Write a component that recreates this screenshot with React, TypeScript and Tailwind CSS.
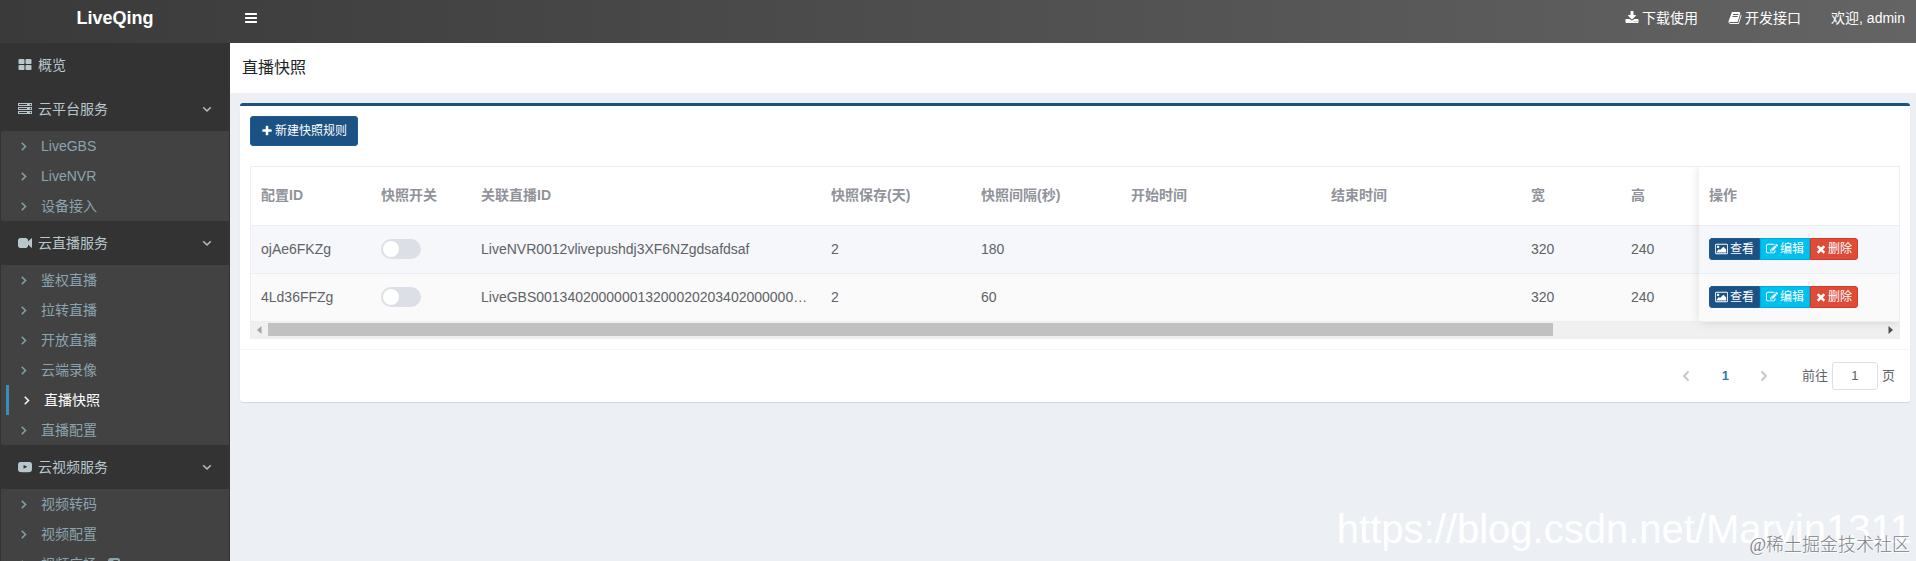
import type { ReactNode } from "react";
import clsx from "clsx";

const icons = {
  bars: "M1664 1344v128q0 26-19 45t-45 19h-1408q-26 0-45-19t-19-45v-128q0-26 19-45t45-19h1408q26 0 45 19t19 45zm0-512v128q0 26-19 45t-45 19h-1408q-26 0-45-19t-19-45v-128q0-26 19-45t45-19h1408q26 0 45 19t19 45zm0-512v128q0 26-19 45t-45 19h-1408q-26 0-45-19t-19-45v-128q0-26 19-45t45-19h1408q26 0 45 19t19 45z",
  download: "M1344 1344q0-26-19-45t-45-19-45 19-19 45 19 45 45 19 45-19 19-45zm256 0q0-26-19-45t-45-19-45 19-19 45 19 45 45 19 45-19 19-45zm128-224v320q0 40-28 68t-68 28h-1472q-40 0-68-28t-28-68v-320q0-40 28-68t68-28h465l135 136q58 56 136 56t136-56l136-136h464q40 0 68 28t28 68zm-325-569q17 41-14 70l-448 448q-18 19-45 19t-45-19l-448-448q-31-29-14-70 17-39 59-39h256v-448q0-26 19-45t45-19h256q26 0 45 19t19 45v448h256q42 0 59 39z",
  book: "M1703 478q40 57 18 129l-275 906q-19 64-76.5 107.5t-122.5 43.5h-923q-77 0-148.5-53.5t-99.5-131.5q-24-67-2-127 0-4 3-27t4-37q1-8-3-21.5t-3-19.5q2-11 8-21t16.5-23.5 16.5-23.5q23-38 45-91.5t30-91.5q3-10 .5-30t-.5-28q3-11 17-28t17-23q21-36 42-92t25-90q1-9-2.5-32t.5-28q4-13 22-30.5t22-22.5q19-26 42.5-84.5t27.5-96.5q1-8-3-25.5t-2-26.5q2-8 9-18t18-23 17-21q8-12 16.5-30.5t15-35 16-36 19.5-32 26.5-23.5 36-11.5 47.5 5.5l-1 3q38-9 51-9h761q74 0 114 56t18 130l-274 906q-36 119-71.5 153.5t-128.5 34.5h-869q-27 0-38 15-11 16-1 43 24 70 144 70h923q29 0 56-15.5t35-41.5l300-987q7-22 5-57 38 15 59 43zm-1064 2q-4 13 2 22.5t20 9.5h608q13 0 25.5-9.5t16.5-22.5l21-64q4-13-2-22.5t-20-9.5h-608q-13 0-25.5 9.5t-16.5 22.5zm-83 256q-4 13 2 22.5t20 9.5h608q13 0 25.5-9.5t16.5-22.5l21-64q4-13-2-22.5t-20-9.5h-608q-13 0-25.5 9.5t-16.5 22.5z",
  thLarge: "M832 1024v384q0 52-38 90t-90 38h-512q-52 0-90-38t-38-90v-384q0-52 38-90t90-38h512q52 0 90 38t38 90zm0-768v384q0 52-38 90t-90 38h-512q-52 0-90-38t-38-90v-384q0-52 38-90t90-38h512q52 0 90 38t38 90zm896 768v384q0 52-38 90t-90 38h-512q-52 0-90-38t-38-90v-384q0-52 38-90t90-38h512q52 0 90 38t38 90zm0-768v384q0 52-38 90t-90 38h-512q-52 0-90-38t-38-90v-384q0-52 38-90t90-38h512q52 0 90 38t38 90z",
  server: "M128 1408h1024v-128h-1024v128zm0-512h1024v-128h-1024v128zm1568 448q0-40-28-68t-68-28-68 28-28 68 28 68 68 28 68-28 28-68zm-1568-960h1024v-128h-1024v128zm1568 448q0-40-28-68t-68-28-68 28-28 68 28 68 68 28 68-28 28-68zm0-512q0-40-28-68t-68-28-68 28-28 68 28 68 68 28 68-28 28-68zm96 832v384h-1792v-384h1792zm0-512v384h-1792v-384h1792zm0-512v384h-1792v-384h1792z",
  video: "M1792 352v1088q0 42-39 59-13 5-25 5-27 0-45-19l-403-403v166q0 119-84.5 203.5t-203.5 84.5h-704q-119 0-203.5-84.5t-84.5-203.5v-704q0-119 84.5-203.5t203.5-84.5h704q119 0 203.5 84.5t84.5 203.5v165l403-402q18-19 45-19 12 0 25 5 39 17 39 59z",
  youtube: "M711 1128l484-250-484-253zM260 262q636-44 1272 0 200 14 240 220 40 414 0 828-40 206-240 220-636 44-1272 0-200-14-240-220-40-414 0-828 40-206 240-220z",
  angleDown: "M1395 736q0 13-10 23l-466 466q-10 10-23 10t-23-10l-466-466q-10-10-10-23t10-23l50-50q10-10 23-10t23 10l393 393 393-393q10-10 23-10t23 10l50 50q10 10 10 23z",
  angleRight: "M1171 960q0 13-10 23l-466 466q-10 10-23 10t-23-10l-50-50q-10-10-10-23t10-23l393-393-393-393q-10-10-10-23t10-23l50-50q10-10 23-10t23 10l466 466q10 10 10 23z",
  external: "M1408 928v-480q0-26-19-45t-45-19h-480q-42 0-59 39-17 41 14 70l144 144-534 534q-19 19-19 45t19 45l102 102q19 19 45 19t45-19l534-534 144 144q18 19 45 19 12 0 25-5 39-17 39-59zm256-512v960q0 119-84.5 203.5t-203.5 84.5h-960q-119 0-203.5-84.5t-84.5-203.5v-960q0-119 84.5-203.5t203.5-84.5h960q119 0 203.5 84.5t84.5 203.5z",
  plus: "M1600 736v192q0 40-28 68t-68 28h-416v416q0 40-28 68t-68 28h-192q-40 0-68-28t-28-68v-416h-416q-40 0-68-28t-28-68v-192q0-40 28-68t68-28h416v-416q0-40 28-68t68-28h192q40 0 68 28t28 68v416h416q40 0 68 28t28 68z",
  picture: "M576 576q0 80-56 136t-136 56-136-56-56-136 56-136 136-56 136 56 56 136zm1024 384v448h-1408v-192l320-320 160 160 512-512zm96-704h-1600q-13 0-22.5 9.5t-9.5 22.5v1216q0 13 9.5 22.5t22.5 9.5h1600q13 0 22.5-9.5t9.5-22.5v-1216q0-13-9.5-22.5t-22.5-9.5zm160 32v1216q0 66-47 113t-113 47h-1600q-66 0-113-47t-47-113v-1216q0-66 47-113t113-47h1600q66 0 113 47t47 113z",
  edit: "M888 1184l116-116-152-152-116 116v56h96v96h56zm440-720q-16-16-33 1l-350 350q-17 17-1 33t33-1l350-350q17-17 1-33zm80 594v190q0 119-84.5 203.5t-203.5 84.5h-832q-119 0-203.5-84.5t-84.5-203.5v-832q0-119 84.5-203.5t203.5-84.5h832q63 0 117 25 15 7 18 23 3 17-9 29l-49 49q-14 14-32 8-23-6-45-6h-832q-66 0-113 47t-47 113v832q0 66 47 113t113 47h832q66 0 113-47t47-113v-126q0-13 9-22l64-64q15-15 35-7t20 29zm-96-738l288 288-672 672h-288v-288zm444 132l-92 92-288-288 92-92q28-28 68-28t68 28l152 152q28 28 28 68t-28 68z",
  times: "M1490 1322q0 40-28 68l-136 136q-28 28-68 28t-68-28l-294-294-294 294q-28 28-68 28t-68-28l-136-136q-28-28-28-68t28-68l294-294-294-294q-28-28-28-68t28-68l136-136q28-28 68-28t68 28l294 294 294-294q28-28 68-28t68 28l136 136q28 28 28 68t-28 68l-294 294 294 294q28 28 28 68z",
};

type IconName = keyof typeof icons;

function Icon({ name, className = "size-3.5", viewBox = "0 0 1792 1792" }: { name: IconName; className?: string; viewBox?: string }) {
  return (
    <svg viewBox={viewBox} fill="currentColor" fillRule="evenodd" className={clsx("shrink-0", className)} aria-hidden="true">
      <path d={icons[name]} />
    </svg>
  );
}

type MenuItem = { label: string; active?: boolean; external?: boolean };
type MenuGroup = { label: string; icon: IconName; items: MenuItem[] };

const menu: MenuGroup[] = [
  { label: "概览", icon: "thLarge", items: [] },
  {
    label: "云平台服务",
    icon: "server",
    items: [{ label: "LiveGBS" }, { label: "LiveNVR" }, { label: "设备接入" }],
  },
  {
    label: "云直播服务",
    icon: "video",
    items: [
      { label: "鉴权直播" },
      { label: "拉转直播" },
      { label: "开放直播" },
      { label: "云端录像" },
      { label: "直播快照", active: true },
      { label: "直播配置" },
    ],
  },
  {
    label: "云视频服务",
    icon: "youtube",
    items: [{ label: "视频转码" }, { label: "视频配置" }, { label: "视频广场", external: true }],
  },
];

const rows = [
  { id: "ojAe6FKZg", live: "LiveNVR0012vlivepushdj3XF6NZgdsafdsaf", days: 2, interval: 180, width: 320, height: 240 },
  { id: "4Ld36FFZg", live: "LiveGBS0013402000000132000202034020000001320000001", days: 2, interval: 60, width: 320, height: 240 },
];

const headers = ["配置ID", "快照开关", "关联直播ID", "快照保存(天)", "快照间隔(秒)", "开始时间", "结束时间", "宽", "高"];

function Header() {
  return (
    <header className="flex h-[43px] shrink-0 items-start bg-linear-to-r from-[#3a3a3a] to-[#646464] text-sm leading-5 text-white">
      <a href="#" className="w-[230px] py-2 text-center text-lg leading-5 font-bold">LiveQing</a>
      <button type="button" aria-label="菜单" className="flex h-9 items-center px-[14px]">
        <Icon name="bars" />
      </button>
      <nav className="ml-auto flex gap-[30px] py-2 pr-[11px]">
        <a href="#" className="flex items-center gap-[3px]">
          <Icon name="download" />
          下载使用
        </a>
        <a href="#" className="flex items-center gap-[3px]">
          <Icon name="book" />
          开发接口
        </a>
        <a href="#">欢迎, admin</a>
      </nav>
    </header>
  );
}

function Sidebar() {
  return (
    <aside className="w-[230px] shrink-0 overflow-hidden border-x border-[#333] bg-[#333] text-sm leading-5">
      {menu.map((group) => (
        <div key={group.label}>
          <a href="#" className="flex h-11 items-center gap-[6px] pr-[15px] pl-[17px] text-[#b8c7ce]">
            <Icon name={group.icon} />
            {group.label}
            {group.items.length > 0 && <Icon name="angleDown" className="ml-auto size-3.5 stroke-current stroke-[60]" />}
          </a>
          {group.items.length > 0 && (
            <ul className="bg-[#424242]">
              {group.items.map((item) => (
                <li key={item.label} className={clsx(item.active && "pl-[5px]")}>
                  <a
                    href="#"
                    className={clsx(
                      "flex h-[30px] items-center gap-[10px]",
                      item.active ? "border-l-[3px] border-[#3c8dbc] pl-[11px] text-white" : "pl-4 text-[#8aa4af]",
                    )}
                  >
                    <Icon name="angleRight" className="size-3.5 stroke-current stroke-[60]" />
                    {item.label}
                    {item.external && <Icon name="external" />}
                  </a>
                </li>
              ))}
            </ul>
          )}
        </div>
      ))}
    </aside>
  );
}

function ActionButton({ className, children }: { className: string; children: ReactNode }) {
  return (
    <button type="button" className={clsx("flex h-[22px] items-center gap-[2px] border px-[5px] text-xs text-white", className)}>
      {children}
    </button>
  );
}

function SnapshotTable() {
  return (
    <div className="overflow-hidden border border-b-0 border-[#ebeef5]">
      <div className="flex">
        <div className="min-w-0 flex-1 overflow-hidden">
          <table className="w-full min-w-[1448px] table-fixed text-left text-sm leading-[23px] text-[#606266]">
            <colgroup>
              <col className="w-[120px]" />
              <col className="w-[100px]" />
              <col className="w-[350px]" />
              <col className="w-[150px]" />
              <col className="w-[150px]" />
              <col className="w-[200px]" />
              <col className="w-[200px]" />
              <col className="w-[100px]" />
              <col />
            </colgroup>
            <thead>
              <tr className="h-[58px] border-b border-[#ebeef5] text-[#909399]">
                {headers.map((header) => (
                  <th key={header} className="px-[10px] font-bold">{header}</th>
                ))}
              </tr>
            </thead>
            <tbody>
              {rows.map((row) => (
                <tr key={row.id} className="h-12 border-b border-[#ebeef5] odd:bg-[#f5f7fa] even:bg-[#fafafa]">
                  <td className="px-[10px]">{row.id}</td>
                  <td className="px-[10px]">
                    <input
                      type="checkbox"
                      role="switch"
                      aria-label="快照开关"
                      className="block h-5 w-10 appearance-none rounded-full bg-[#dcdfe6] p-[2px] before:block before:size-4 before:rounded-full before:bg-white checked:bg-[#1c5183] checked:before:ml-5"
                    />
                  </td>
                  <td className="truncate px-[10px]">{row.live}</td>
                  <td className="px-[10px]">{row.days}</td>
                  <td className="px-[10px]">{row.interval}</td>
                  <td />
                  <td />
                  <td className="px-[10px]">{row.width}</td>
                  <td className="px-[10px]">{row.height}</td>
                </tr>
              ))}
            </tbody>
          </table>
        </div>

        {/* Fixed action column */}
        <div className="relative z-10 w-[200px] shrink-0 bg-white shadow-[0_0_10px_rgba(0,0,0,0.12)]">
          <table className="w-full text-left text-sm leading-[23px]">
            <thead>
              <tr className="h-[58px] border-b border-[#ebeef5] text-[#909399]">
                <th className="px-[10px] font-bold">操作</th>
              </tr>
            </thead>
            <tbody>
              {rows.map((row) => (
                <tr key={row.id} className="h-12 border-b border-[#ebeef5] odd:bg-[#f5f7fa] even:bg-[#fafafa]">
                  <td className="px-[10px]">
                    <div className="flex">
                      <ActionButton className="rounded-l-[3px] border-[#1f5a92] bg-[#1c5183]">
                        <Icon name="picture" className="h-3 w-[13px]" viewBox="-64 0 1920 1792" />
                        查看
                      </ActionButton>
                      <ActionButton className="border-[#00acd6] bg-[#00c0ef]">
                        <Icon name="edit" className="size-3" />
                        编辑
                      </ActionButton>
                      <ActionButton className="rounded-r-[3px] border-[#d73925] bg-[#dd4b39]">
                        <Icon name="times" className="h-3 w-[10px]" viewBox="192 0 1408 1792" />
                        删除
                      </ActionButton>
                    </div>
                  </td>
                </tr>
              ))}
            </tbody>
          </table>
        </div>
      </div>

      {/* Horizontal scrollbar */}
      <div className="flex h-[17px] items-center border-b border-[#ebeef5] bg-[#f0f0f0]">
        <svg viewBox="0 0 17 16" className="h-4 w-[17px] shrink-0" aria-hidden="true">
          <path d="M10.500 4v8L6 8z" fill="#a3a3a3" />
        </svg>
        <div className="flex-1">
          <div className="h-[13px] w-[79.6%] bg-[#c1c1c1]" />
        </div>
        <svg viewBox="0 0 17 16" className="h-4 w-[17px] shrink-0" aria-hidden="true">
          <path d="M6.500 4v8L11 8z" fill="#505050" />
        </svg>
      </div>
    </div>
  );
}

function Pagination() {
  return (
    <div className="flex items-center justify-end border-t border-[#f4f4f4] py-3 pr-[15px] text-[13px] leading-7 text-[#606266]">
      <button type="button" aria-label="上一页" className="flex h-7 w-[39px] items-center justify-center text-[#c0c4cc]">
        <svg viewBox="0 0 12 12" className="size-3" fill="none" stroke="currentColor" strokeWidth="1.8" aria-hidden="true">
          <path d="M8.500 1.500L4 6l4.500 4.500" />
        </svg>
      </button>
      <button type="button" className="h-7 w-[39px] font-bold text-[#337ab7]">1</button>
      <button type="button" aria-label="下一页" className="flex h-7 w-[39px] items-center justify-center text-[#c0c4cc]">
        <svg viewBox="0 0 12 12" className="size-3" fill="none" stroke="currentColor" strokeWidth="1.8" aria-hidden="true">
          <path d="M3.500 1.500L8 6l-4.500 4.500" />
        </svg>
      </button>
      <label className="ml-[18px] flex items-center gap-1">
        前往
        <input type="text" defaultValue="1" className="h-7 w-[46px] rounded-[3px] border border-[#dcdfe6] bg-white text-center" />
        页
      </label>
    </div>
  );
}

export default function App() {
  return (
    <div className="relative flex h-screen flex-col overflow-hidden bg-[#ecf0f5] font-['Liberation_Sans','Noto_Sans_CJK_SC',sans-serif]">
      <Header />
      <div className="flex min-h-0 flex-1">
        <Sidebar />
        <main className="min-w-0 flex-1">
          <h1 className="bg-white px-3 py-[13px] text-base leading-6 text-[#222]">直播快照</h1>
          <section className="mt-[10px] mr-[6px] ml-[10px] rounded-[3px] border-t-[3px] border-[#1c5183] bg-white shadow-[0_1px_1px_rgba(0,0,0,0.1)]">
            <div className="p-[10px]">
              <button
                type="button"
                className="mb-5 flex h-[30px] items-center gap-[2px] rounded-[3px] border border-[#1f5a92] bg-[#1c5183] px-[10px] text-xs text-white"
              >
                <Icon name="plus" className="size-3" />
                新建快照规则
              </button>
              <SnapshotTable />
            </div>
            <Pagination />
          </section>
        </main>
      </div>

      {/* Watermarks */}
      <p className="pointer-events-none absolute right-1 bottom-2 text-[40px] leading-12 text-white">https://blog.csdn.net/Marvin1311</p>
      <p className="pointer-events-none absolute right-[6px] bottom-1 font-['Liberation_Serif','Noto_Sans_CJK_SC',serif] text-lg leading-6 font-light text-[#808285] [text-shadow:1px_1px_0_#fff]">
        @稀土掘金技术社区
      </p>
    </div>
  );
}
